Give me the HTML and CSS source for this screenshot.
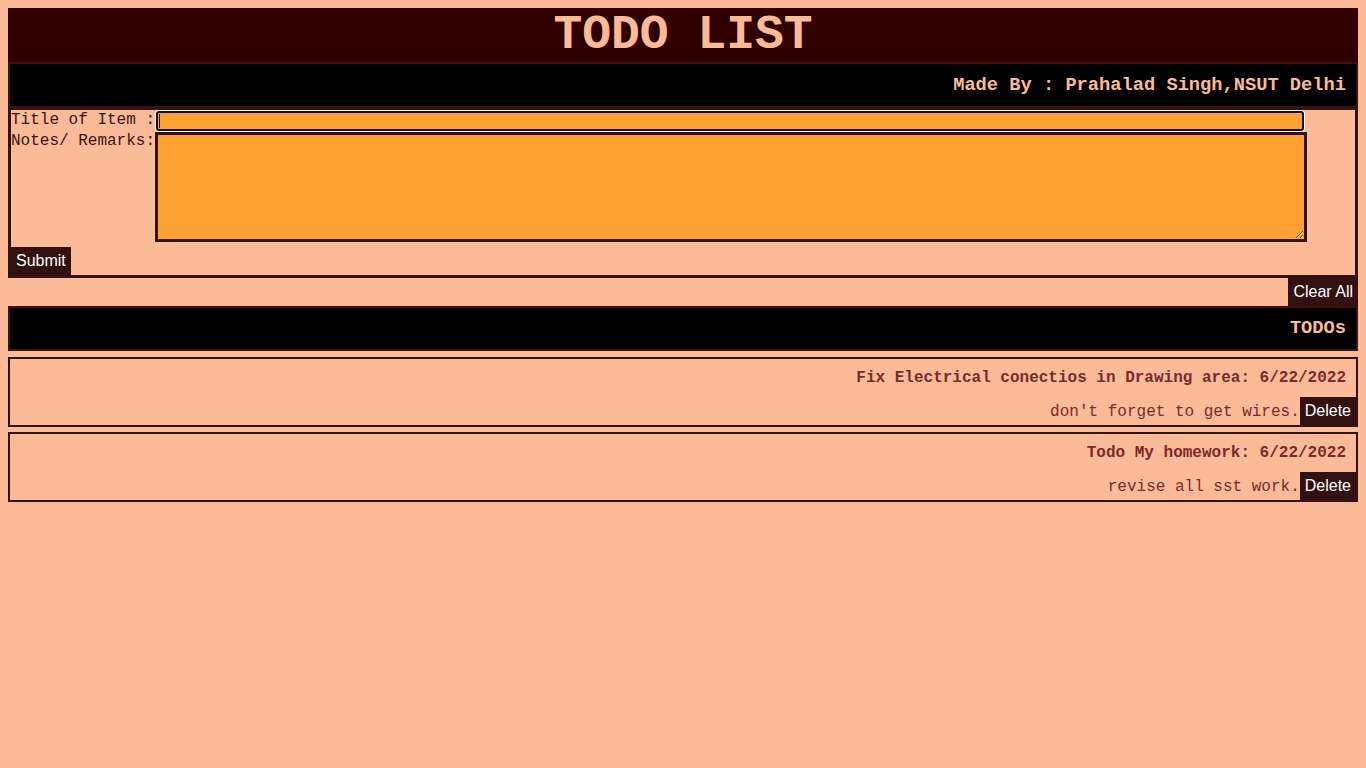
FILE: index.html
```html
<!DOCTYPE html>
<html>
<head>
<meta charset="utf-8">
<title>TODO LIST</title>
<link rel="stylesheet" href="styles.css">
</head>
<body>
<h1 class="title">TODO LIST</h1>
<div class="bar madeby">Made By : Prahalad Singh,NSUT Delhi</div>
<form class="form">
  <div class="row">
    <label class="label" for="t">Title of Item :</label>
    <span class="field-wrap"><input class="input" id="t" type="text"><span class="caret"></span></span>
  </div>
  <div class="row">
    <label class="label" for="n">Notes/ Remarks:</label>
    <textarea class="textarea" id="n"></textarea>
  </div>
  <button class="btn submit" type="button">Submit</button>
</form>
<div class="clear-row"><button class="btn" type="button">Clear All</button></div>
<div class="bar todos-head">TODOs</div>
<div class="item">
  <div class="item-title">Fix Electrical conectios in Drawing area: 6/22/2022</div>
  <div class="item-desc"><span>don't forget to get wires.</span><button class="btn" type="button">Delete</button></div>
</div>
<div class="item">
  <div class="item-title">Todo My homework: 6/22/2022</div>
  <div class="item-desc"><span>revise all sst work.</span><button class="btn" type="button">Delete</button></div>
</div>
</body>
</html>
```
FILE: styles.css
```css
html, body {
  background: #fbbb98;
}
body {
  margin: 8px;
  font-family: "Liberation Mono", monospace;
  font-size: 16px;
  color: #3a1414;
}
.title {
  margin: 0;
  height: 54px;
  line-height: 54px;
  background: #300000;
  color: #fbbb98;
  text-align: center;
  font-size: 48px;
  font-weight: bold;
}
.bar {
  border: 2px solid #3a1212;
  background: #000;
  color: #fbbb98;
  font-weight: bold;
  font-size: 18.72px;
  text-align: right;
  padding-right: 10px;
}
.madeby {
  height: 42px;
  line-height: 42px;
}
.form {
  margin: 0;
  border: 3px solid #341111;
  border-top-width: 2px;
  height: 165px;
  display: flex;
  flex-direction: column;
  align-items: flex-start;
}
.row {
  display: flex;
  align-items: flex-start;
}
.label {
  flex: 0 0 144px;
  width: 144px;
  white-space: nowrap;
  line-height: 18px;
  color: #3a1414;
}
.row:first-child .label {
  padding-top: 1px;
}
.field-wrap {
  position: relative;
  display: block;
  padding: 1px 1px;
}
.input {
  display: block;
  box-sizing: border-box;
  width: 1148px;
  height: 20px;
  margin: 0;
  padding: 0;
  background: #ffa032;
  border: 2px solid #141010;
  border-radius: 3px;
  box-shadow: 0 0 0 1px #ffffff;
  outline: none;
}
.caret {
  position: absolute;
  left: 4px;
  top: 4px;
  width: 1px;
  height: 14px;
  background: #1a1010;
}
.textarea {
  display: block;
  box-sizing: border-box;
  width: 1152px;
  height: 110px;
  margin: 0;
  padding: 0;
  background: #ffa032;
  border: 3px solid #341111;
  outline: none;
}
.btn {
  font-family: "Liberation Sans", Arial, sans-serif;
  font-size: 16px;
  line-height: 18px;
  height: 28px;
  padding: 5px 5px;
  border: none;
  border-radius: 0;
  margin: 0;
  background: #331111;
  color: #ffffff;
}
.submit {
  margin-top: 5px;
}
.clear-row {
  display: flex;
  justify-content: flex-end;
}
.todos-head {
  height: 41px;
  line-height: 41px;
}
.item {
  margin-top: 5px;
  border: 2px solid #341111;
  color: #7b2a2a;
}
.todos-head + .item {
  margin-top: 6px;
}
.item-title {
  font-weight: bold;
  text-align: right;
  padding: 10px 10px 10px 0;
  line-height: 18px;
}
.item-desc {
  display: flex;
  justify-content: flex-end;
  align-items: center;
  height: 28px;
}
.item-desc span {
  padding-top: 2px;
}
```
